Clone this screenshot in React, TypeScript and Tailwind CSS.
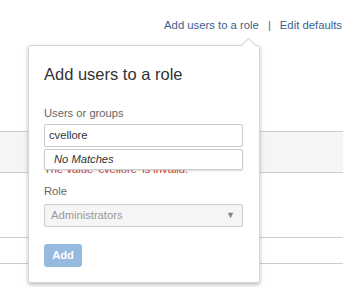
export default function App() {
    return (
        <main className="relative w-[353px] h-[287px] bg-white overflow-hidden font-['Liberation_Sans',Arial,sans-serif] text-[11px] text-[#333]">
            {/* page header links */}
            <div className="flex justify-end pr-[11px] pt-[18px] h-[131px] text-[11.3px] text-[#3b5f8f] leading-[14px]">
                <span>Add users to a role</span>
                <span className="px-[9px] text-[#666]">|</span>
                <span>Edit defaults</span>
            </div>

            {/* table behind the popover */}
            <div className="w-[343px]">
                <div className="h-[42px] bg-[#f5f5f5] border-y border-[#ccc]" />
                <div className="h-[65px] border-b border-[#ccc]" />
                <div className="h-[26px] border-b border-[#ccc]" />
            </div>

            {/* popover */}
            <div className="absolute left-[28px] top-[45px] w-[232px] h-[238px] bg-white border border-[#d5d5d5] rounded-[2px] shadow-[0_2px_4px_rgba(0,0,0,0.25)]">
                <div className="absolute -top-[6px] right-[5px] w-[11px] h-[11px] bg-white border-l border-t border-[#d5d5d5] rotate-45" />
                <div className="relative px-[15px] pt-[17px]">
                    <h2 className="text-[16.5px] leading-[22px] text-[#333]">Add users to a role</h2>

                    <div className="mt-[21px] text-[11.2px] leading-[14px] text-[#666]">Users or groups</div>
                    <div className="relative mt-[4px]">
                        <div className="h-[23px] w-[199px] border border-[#ccc] rounded-[2px] bg-white px-[4px] flex items-center text-[11.2px] text-[#333]">
                            cvellore
                        </div>
                        <div className="mt-[15px] text-[11.2px] leading-[14px] text-[#d04437]">
                            The value 'cvellore' is invalid.
                        </div>
                        <div className="absolute left-0 top-[25px] h-[21px] w-[199px] bg-white border border-[#ccc] rounded-[2px] shadow-[0_1px_2px_rgba(0,0,0,0.15)] px-[9px] flex items-center italic text-[11.2px] text-[#333]">
                            No Matches
                        </div>
                    </div>

                    <div className="mt-[8px] text-[11.2px] leading-[14px] text-[#666]">Role</div>
                    <div className="mt-[6px] h-[23px] w-[199px] border border-[#ccc] rounded-[2px] bg-[#f5f5f5] pl-[6px] pr-[7px] flex items-center justify-between text-[11.2px] text-[#999]">
                        <span>Administrators</span>
                        <span className="text-[9px] text-[#888]">▼</span>
                    </div>

                    <button className="mt-[17px] h-[23px] w-[38px] rounded-[3px] bg-[#96b9de] text-white font-bold text-[11.2px] flex items-center justify-center">
                        Add
                    </button>
                </div>
            </div>
        </main>
    )
}
